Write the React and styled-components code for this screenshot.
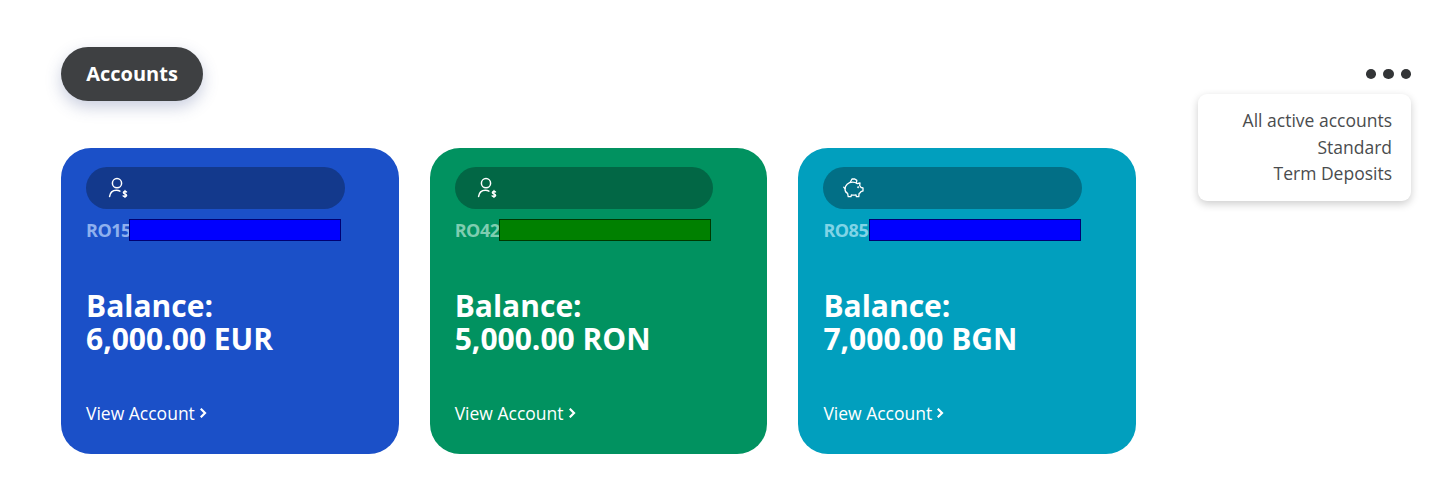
import React from "react";
import styled, { createGlobalStyle } from "styled-components";

const Global = createGlobalStyle`
  html, body { margin: 0; padding: 0; background: #fff; }
  body { font-family: "Open Sans", "Noto Sans", sans-serif; }
`;

const Page = styled.div`
  width: 1452px;
  height: 487px;
  box-sizing: border-box;
  padding: 47px 41px 0 61px;
  overflow: hidden;
`;

const Header = styled.header`
  display: flex;
  justify-content: space-between;
  align-items: flex-start;
  height: 101px;
`;

const Title = styled.h1`
  margin: 0;
  width: 142px;
  height: 54px;
  box-sizing: border-box;
  padding-bottom: 2px;
  display: flex;
  align-items: center;
  justify-content: center;
  border-radius: 27px;
  background: #3e4042;
  color: #fff;
  font-size: 20px;
  font-weight: 700;
  box-shadow: 0 6px 16px rgba(60, 80, 140, 0.28);
`;

const MenuWrap = styled.div`
  position: relative;
  padding-top: 22px;
`;

const Dots = styled.div`
  display: flex;
  gap: 7px;
  justify-content: flex-end;
`;

const Dot = styled.span`
  width: 10.5px;
  height: 10px;
  border-radius: 50%;
  background: #333537;
`;

const Menu = styled.ul`
  position: absolute;
  top: 47px;
  right: 0;
  width: 213px;
  height: 107px;
  box-sizing: border-box;
  margin: 0;
  padding: 13px 19px 0 0;
  list-style: none;
  text-align: right;
  background: #fff;
  border-radius: 9px;
  box-shadow: 0 3px 9px rgba(0, 0, 0, 0.2);
  color: #4a4c4e;
  font-size: 17.5px;
  line-height: 26.5px;
`;

const Cards = styled.section`
  display: flex;
  gap: 31.2px;
`;

const Card = styled.article`
  width: 337.5px;
  height: 306px;
  box-sizing: border-box;
  padding: 19px 25px 0;
  border-radius: 30px;
  background: ${(p) => p.$bg};
  color: #fff;
  display: flex;
  flex-direction: column;
  align-items: flex-start;
`;

const IconPill = styled.div`
  width: 258.5px;
  height: 42px;
  box-sizing: border-box;
  padding-left: ${(p) => p.$pad}px;
  display: flex;
  align-items: center;
  border-radius: 21px;
  background: ${(p) => p.$bg};
`;

const IbanRow = styled.div`
  display: flex;
  align-items: center;
  height: 22px;
  margin-top: 10px;
`;

const Iban = styled.span`
  font-size: 18px;
  font-weight: 700;
  letter-spacing: -0.5px;
  color: ${(p) => p.$color};
  width: ${(p) => p.$w}px;
`;

const Mask = styled.span`
  width: 212px;
  height: 22px;
  box-sizing: border-box;
  background: ${(p) => p.$bg};
  border: 1px solid rgba(0, 0, 0, 0.55);
`;

const Balance = styled.div`
  margin-top: 48px;
  font-size: 30px;
  line-height: 33px;
  font-weight: 700;
`;

const ViewLink = styled.a`
  margin-top: 45.5px;
  display: flex;
  align-items: center;
  gap: 5px;
  font-size: 17.5px;
  line-height: 24px;
  color: #fff;
`;

const UserDollar = () => (
  <svg width="22" height="22" viewBox="0 0 22 22" fill="none" stroke="#fff" strokeWidth="1.5" strokeLinecap="round">
    <circle cx="10" cy="6.2" r="4.6" />
    <path d="M2.6 19.5c.5-4 3.2-6.3 6.8-6.3 1.3 0 2.5.3 3.5.9" />
    <path d="M19.6 15c-.4-.9-3.2-1-3.3.5-.1 1.7 3.5 1.1 3.4 2.9-.1 1.5-3 1.3-3.6.4M18 13.4v7" strokeWidth="1.3" />
  </svg>
);

const Piggy = () => (
  <svg width="22" height="21" viewBox="0 0 22 21" fill="none" stroke="#fff" strokeWidth="1.3" strokeLinejoin="round" strokeLinecap="round">
    <path d="M7.2 4.4 9 1h2.8l2 1.4-.4 2.4" />
    <path d="M2 11c0-3.8 3.2-6.8 7.5-6.8 2 0 3.6.5 4.9 1.5l2.6-.7-.3 2.6c.6.6 1 1.2 1.3 1.9l2 .4v3l-2 .7c-.5.8-1.1 1.4-1.9 2l-.3 3h-2.4l-.4-1.8c-1.6.4-3 .4-4.6.1l-.4 1.7H5.2l-.6-3.2C3 14.8 2 13 2 11Z" />
    <path d="M2 10.5.8 9.2" />
    <circle cx="15.2" cy="9.3" r=".4" />
  </svg>
);

const Chevron = () => (
  <svg width="7" height="10" viewBox="0 0 7 10" fill="none" stroke="#fff" strokeWidth="2.2" strokeLinecap="square">
    <path d="M1.5 1.5 5 5 1.5 8.5" />
  </svg>
);

const accounts = [
  { bg: "#1b50c8", pill: "#13398c", prefix: "RO15", prefixColor: "#8fb0ee", mask: "#0000ff", w: 43, amount: "6,000.00 EUR", icon: <UserDollar />, pad: 21 },
  { bg: "#019260", pill: "#026745", prefix: "RO42", prefixColor: "#7fcdb0", mask: "#008000", w: 44.5, amount: "5,000.00 RON", icon: <UserDollar />, pad: 21 },
  { bg: "#019fbe", pill: "#026f86", prefix: "RO85", prefixColor: "#80d4e6", mask: "#0000ff", w: 46, amount: "7,000.00 BGN", icon: <Piggy />, pad: 20 },
];

export default function App() {
  return (
    <Page>
      <Global />
      <Header>
        <Title>Accounts</Title>
        <MenuWrap>
          <Dots>
            <Dot />
            <Dot />
            <Dot />
          </Dots>
          <Menu>
            <li>All active accounts</li>
            <li>Standard</li>
            <li>Term Deposits</li>
          </Menu>
        </MenuWrap>
      </Header>
      <Cards>
        {accounts.map((a) => (
          <Card key={a.prefix} $bg={a.bg}>
            <IconPill $bg={a.pill} $pad={a.pad}>{a.icon}</IconPill>
            <IbanRow>
              <Iban $color={a.prefixColor} $w={a.w}>{a.prefix}</Iban>
              <Mask $bg={a.mask} />
            </IbanRow>
            <Balance>
              Balance:
              <br />
              {a.amount}
            </Balance>
            <ViewLink>
              View Account <Chevron />
            </ViewLink>
          </Card>
        ))}
      </Cards>
    </Page>
  );
}
